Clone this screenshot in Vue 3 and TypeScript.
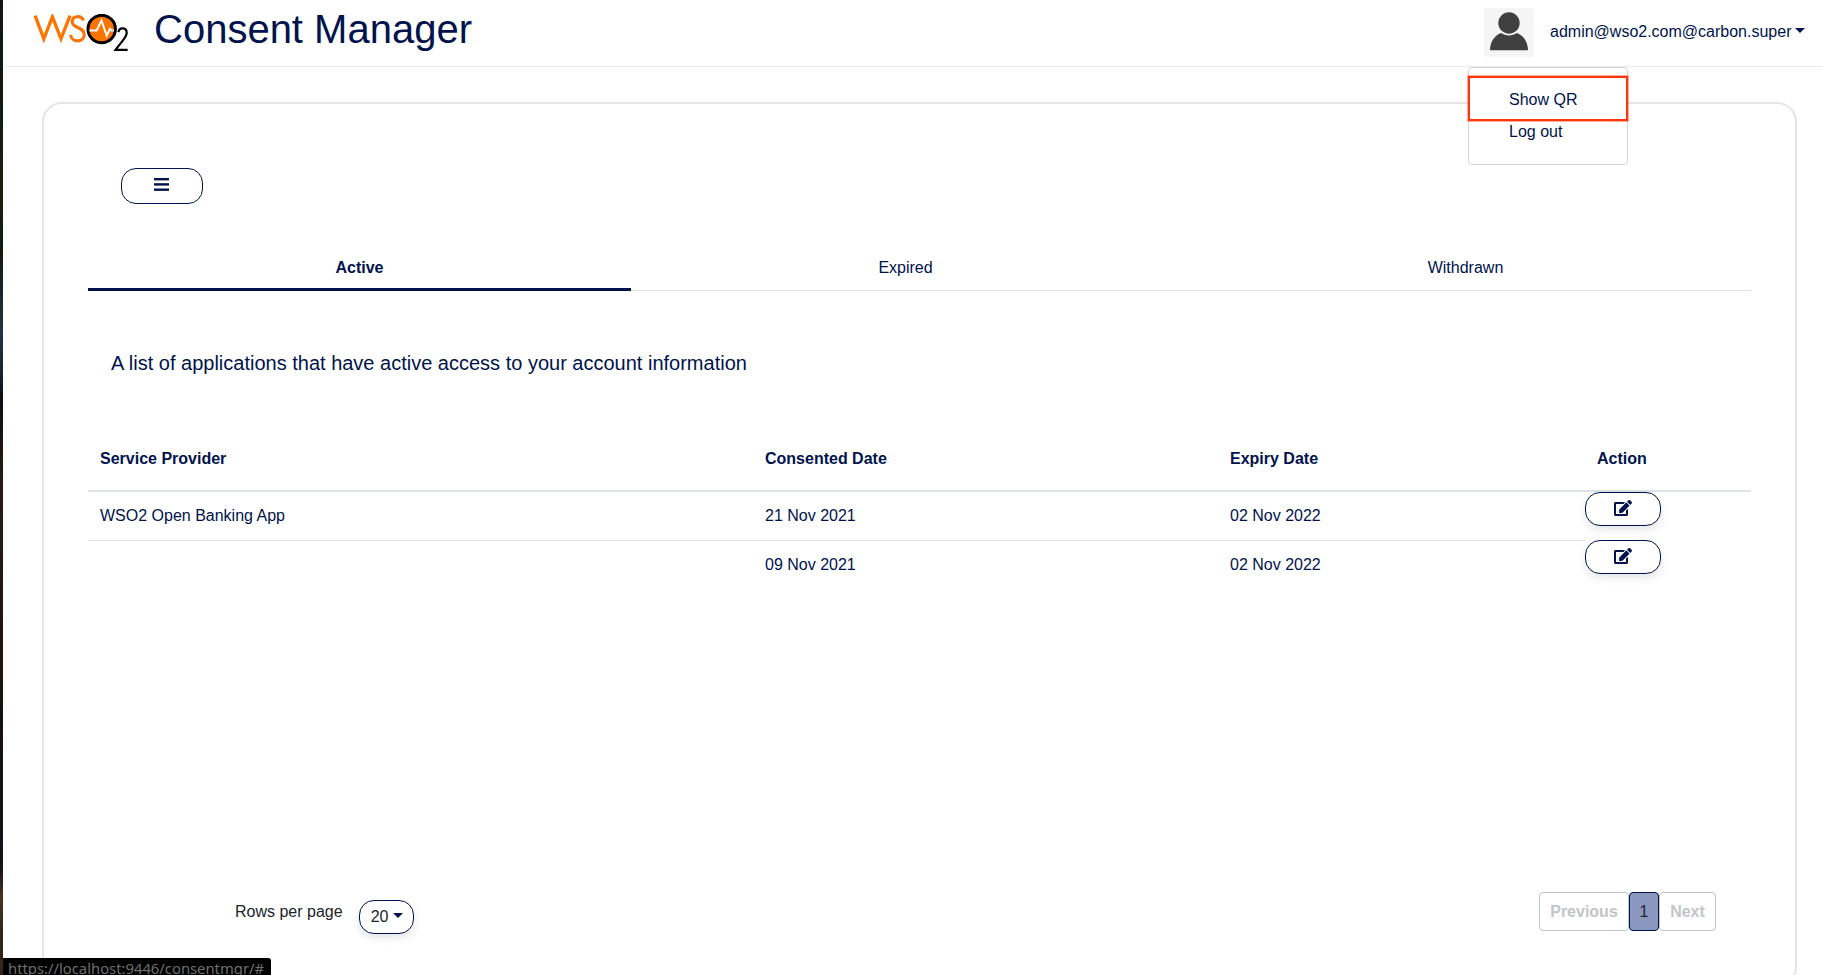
<script setup lang="ts">
interface Consent {
  provider: string
  consented: string
  expiry: string
}

const tabs: string[] = ['Active', 'Expired', 'Withdrawn']
const activeTab = 'Active'
const consents: Consent[] = [
  { provider: 'WSO2 Open Banking App', consented: '21 Nov 2021', expiry: '02 Nov 2022' },
  { provider: '', consented: '09 Nov 2021', expiry: '02 Nov 2022' },
]
</script>

<template>
  <div class="screen">
    <div class="edge"></div>
    <div class="page">
      <header class="header">
        <svg class="logo" width="96" height="40" viewBox="0 0 96 40">
          <g fill="none" stroke="#ff7300">
            <path d="M2.1 1.7 L10.8 24.8 L19.4 2.8 L28 24.8 L37 1.7" stroke-width="3.3" stroke-miterlimit="8" />
            <path d="M50.4 6.5 C48.6 1.2 39.2 1.2 39.2 7.7 C39.2 14.6 51.2 12.4 51.2 20.6 C51.2 29 38.2 28.8 37.7 20.8" stroke-width="3.1" />
          </g>
          <circle cx="68.7" cy="15" r="13.7" fill="#ff7300" stroke="#000" stroke-width="3" />
          <path d="M56.5 16.6 H63.5 L68.5 6.5 L73.7 21.7 L77 14.8 L78.6 16.6 H81" fill="none" stroke="#fff" stroke-width="2" />
          <path d="M85.4 18.2 C86.3 12.6 94 13.2 93.7 19.2 C93.5 23.5 87 29.5 82.5 35.9 H94.6" fill="none" stroke="#000" stroke-width="2.2" />
        </svg>
        <h1 class="title">Consent Manager</h1>
        <div class="account">
          <svg class="avatar" width="50" height="49" viewBox="0 0 50 49">
            <rect width="50" height="49" rx="3" fill="#f5f5f5" />
            <circle cx="25" cy="15" r="10.7" fill="#404040" />
            <path d="M6 42.3 C6 34 10.5 27.5 17 25 C22 28.3 28 28.3 33 25 C39.5 27.5 44 34 44 42.3 Z" fill="#404040" />
          </svg>
          <span class="user">admin@wso2.com@carbon.super</span>
          <span class="caret"></span>
          <div class="menu">
            <a class="menu-item marked">Show QR</a>
            <a class="menu-item">Log out</a>
          </div>
        </div>
      </header>

      <main class="card">
        <button class="pill toggle">
          <svg width="15" height="13" viewBox="0 0 15 13" fill="#00134d">
            <rect width="15" height="2.4" />
            <rect y="5.2" width="15" height="2.4" />
            <rect y="10.5" width="15" height="2.4" />
          </svg>
        </button>

        <nav class="tabs">
          <a v-for="tab in tabs" :key="tab" class="tab" :class="{ active: tab === activeTab }">{{ tab }}</a>
        </nav>

        <p class="intro">A list of applications that have active access to your account information</p>

        <div class="grid-row head">
          <span>Service Provider</span>
          <span>Consented Date</span>
          <span>Expiry Date</span>
          <span>Action</span>
        </div>
        <div v-for="(c, i) in consents" :key="i" class="grid-row body-row">
          <span>{{ c.provider }}</span>
          <span>{{ c.consented }}</span>
          <span>{{ c.expiry }}</span>
          <div class="action">
            <button class="pill edit">
              <svg width="18" height="16" viewBox="0 0 576 512" fill="#00134d">
                <path d="M402.6 83.2l90.2 90.2c3.8 3.8 3.8 10 0 13.8L274.4 405.6l-92.8 10.3c-12.4 1.4-22.9-9.1-21.5-21.5l10.3-92.8L388.8 83.2c3.8-3.8 10-3.8 13.8 0zm162-22.9l-48.8-48.8c-15.2-15.2-39.9-15.2-55.2 0l-35.4 35.4c-3.8 3.8-3.8 10 0 13.8l90.2 90.2c3.8 3.8 10 3.8 13.8 0l35.4-35.4c15.2-15.3 15.2-40 0-55.2zM384 346.2V448H64V128h229.8c3.2 0 6.2-1.3 8.5-3.5l40-40c7.6-7.6 2.2-20.5-8.5-20.5H48C21.5 64 0 85.5 0 112v352c0 26.5 21.5 48 48 48h352c26.5 0 48-21.5 48-48V306.2c0-10.7-12.9-16-20.5-8.5l-40 40c-2.2 2.3-3.5 5.3-3.5 8.5z" />
              </svg>
            </button>
          </div>
        </div>

        <footer class="footer">
          <span class="rows-label">Rows per page</span>
          <button class="pill rows">20<span class="caret"></span></button>
          <div class="pager">
            <span class="page-link">Previous</span>
            <span class="page-link current">1</span>
            <span class="page-link">Next</span>
          </div>
        </footer>
      </main>
    </div>
    <div class="status">https://localhost:9446/consentmgr/#</div>
  </div>
</template>

<style>
body {
  margin: 0;
  overflow: hidden;
  background: #fff;
}
</style>

<style scoped>
* {
  box-sizing: border-box;
}
.screen {
  position: relative;
  display: flex;
  width: 1823px;
  height: 975px;
  overflow: hidden;
  font: 16px/24px "Liberation Sans", Arial, sans-serif;
  color: #00134d;
}
.edge {
  width: 3px;
  flex: none;
  background: linear-gradient(#10170f 0, #17200f 20%, #141a10 26%, #223344 34%, #1a2430 38%, #0d0d12 41%, #2b1a14 50%, #161210 75%, #15131a 89%, #4a3421 92%, #2d2519 96%, #3a2418);
}
.page {
  flex: 1;
  display: flex;
  flex-direction: column;
}
.header {
  display: flex;
  height: 67px;
  flex: none;
  margin-left: 2px;
  border-bottom: 1px solid #ebebeb;
}
.logo {
  margin: 14px 0 0 28px;
}
.title {
  margin: 5px 0 0 25px;
  font-size: 40px;
  line-height: 48px;
  font-weight: 400;
}
.account {
  position: relative;
  display: flex;
  width: 339px;
  margin: 8px 0 0 auto;
}
.user {
  margin: 12px 0 0 16px;
}
.caret {
  width: 0;
  height: 0;
  border: 5px solid transparent;
  border-top-color: #00134d;
  border-bottom: 0;
}
.user + .caret {
  margin: 20px 0 0 4px;
}
.menu {
  position: absolute;
  left: -16px;
  top: 59px;
  width: 160px;
  height: 98px;
  padding-top: 8px;
  border: 1px solid #d6d6d6;
  border-radius: 4px;
  background: #fff;
  display: flex;
  flex-direction: column;
}
.menu-item {
  padding-left: 40px;
}
.marked {
  height: 45px;
  margin: 0 -1px;
  padding: 10px 0 0 39px;
  border: 2px solid #ff360d;
  box-shadow: 0 0 0 1px rgba(255, 54, 13, 0.4);
}
.marked + .menu-item {
  margin-top: -1px;
}
.card {
  width: 1755px;
  height: 885px;
  flex: none;
  margin: 35px 0 0 39px;
  padding: 64px 44px 0;
  border: 2px solid #e5e5e5;
  border-radius: 20px;
}
.pill {
  display: flex;
  align-items: center;
  justify-content: center;
  border: 1px solid #00134d;
  border-radius: 15px;
  background: #fff;
  color: #00134d;
  font: inherit;
  padding: 0;
}
.toggle {
  width: 82px;
  height: 36px;
  margin-left: 33px;
  padding: 0 1px 3px 0;
}
.tabs {
  display: grid;
  grid-template-columns: 543px 549px 571px;
  height: 42px;
  margin-top: 45px;
}
.tab {
  padding-top: 7px;
  border-bottom: 1px solid #dfe0e2;
  text-align: center;
}
.tab.active {
  border-bottom: 3px solid #00134d;
  font-weight: 700;
}
.intro {
  margin: 57px 0 0 23px;
  font-size: 20px;
  line-height: 30px;
}
.grid-row {
  display: grid;
  grid-template-columns: 665px 465px 367px 166px;
}
.grid-row > span {
  padding-left: 12px;
}
.head {
  height: 78px;
  margin-top: 36px;
  padding-top: 33px;
  border-bottom: 2px solid #dee2e6;
  font-weight: 700;
}
.body-row {
  height: 48px;
}
.body-row > span {
  padding-top: 12px;
}
.body-row + .body-row > span {
  border-top: 1px solid #dee2e6;
}
.edit {
  width: 76px;
  height: 34px;
  padding: 0 0 2px;
  box-shadow: 0 4px 8px rgba(0, 0, 0, 0.1);
}
.footer {
  display: flex;
  align-items: flex-start;
  margin-top: 304px;
  padding: 0 35px 0 147px;
}
.rows-label {
  margin-top: 8px;
  color: #212529;
}
.rows {
  width: 55px;
  height: 34px;
  margin: 8px 0 0 16px;
  padding-left: 1px;
  color: #212529;
  box-shadow: 0 4px 8px rgba(0, 0, 0, 0.1);
}
.rows .caret {
  margin: -3px 0 0 4px;
}
.pager {
  display: grid;
  grid-template-columns: 90px 30px 57px;
  margin-left: auto;
}
.page-link {
  height: 39px;
  padding-top: 7px;
  border: 1px solid #c3c4c7;
  border-radius: 4px;
  color: #c3c4c9;
  font-weight: 700;
  text-align: center;
}
.page-link.current {
  border-color: #00134d;
  background: #8a98c0;
  color: #212529;
  font-weight: 400;
}
.status {
  position: absolute;
  left: 3px;
  top: 958px;
  width: 268px;
  height: 17px;
  padding-left: 5px;
  overflow: hidden;
  border-top-right-radius: 3px;
  background: #000;
  color: #6e6e6e;
  font: 14.8px/20px "Noto Sans", sans-serif;
  white-space: nowrap;
}
</style>
